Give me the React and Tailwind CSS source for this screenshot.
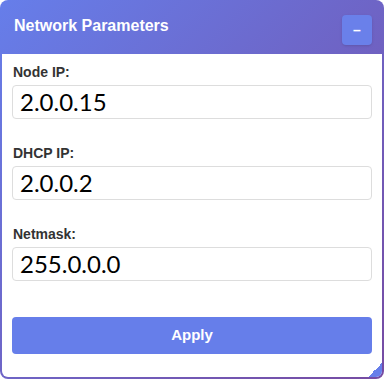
export default function App() {
  const fields = [
    { label: "Node IP:", value: "2.0.0.15" },
    { label: "DHCP IP:", value: "2.0.0.2" },
    { label: "Netmask:", value: "255.0.0.0" },
  ];
  return (
    <div className="w-[384px] h-[379px] bg-white">
      <div
        className="relative w-[384px] h-[379px] rounded-[8px] bg-[linear-gradient(135deg,#667eea_0%,#764ba2_100%)] flex flex-col px-[2px] pb-[2px] overflow-hidden"
        style={{ fontFamily: '"Liberation Sans", Arial, sans-serif' }}
      >
        <div className="h-[54px] shrink-0 flex items-center justify-between pl-[12px] pr-[12px]">
          <span className="text-white font-bold text-[16px] leading-none -mt-[2px]">Network Parameters</span>
          <button className="w-[30px] h-[30px] rounded-[4px] bg-[#6a80ea] text-white font-bold text-[14px] flex items-center justify-center shadow-sm -mr-[2px] mt-[6px]">
            –
          </button>
        </div>
        <div className="relative flex-1 bg-white rounded-b-[6px] pt-[10px] px-[10px]">
          {fields.map((f) => (
            <div key={f.label} className="mb-[26px]">
              <label className="block text-[14px] font-bold text-[#333] leading-[16px] mb-[5px] pl-[1px]">
                {f.label}
              </label>
              <div className="h-[34px] border border-[#ddd] rounded-[4px] flex items-center pl-[7px]">
                <span
                  className="text-[24px] text-black leading-none"
                  style={{ fontFamily: 'Lato, "Noto Sans", sans-serif' }}
                >
                  {f.value}
                </span>
              </div>
            </div>
          ))}
          <button className="w-full h-[37px] mt-[10px] rounded-[4px] bg-[#667eea] text-white font-bold text-[15px]">
            Apply
          </button>
          <div className="absolute right-0 bottom-0 w-[14px] h-[14px] bg-[linear-gradient(135deg,transparent_50%,#667eea_50%)] rounded-br-[6px]"></div>
        </div>
      </div>
    </div>
  );
}
